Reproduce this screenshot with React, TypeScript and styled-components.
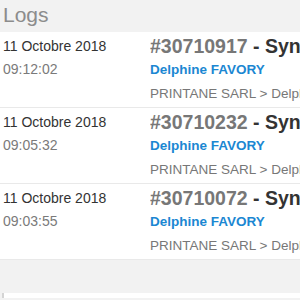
import React from "react";
import styled, { createGlobalStyle } from "styled-components";

const Global = createGlobalStyle`
  html, body { margin: 0; padding: 0; background: #ffffff; }
  body { font-family: "Liberation Sans", Arial, sans-serif; overflow: hidden; }
`;

const Page = styled.div`
  width: 300px;
  height: 300px;
  overflow: hidden;
  background: #f2f2f2;
`;

const Header = styled.div`
  height: 32px;
  background: #f2f2f2;
  padding-left: 3px;
  box-sizing: border-box;
`;

const Title = styled.h1`
  margin: 0;
  font-size: 21px;
  font-weight: 400;
  color: #8c8c8c;
  line-height: 29px;
`;

const List = styled.div`
  background: #ffffff;
`;

const Row = styled.div`
  display: flex;
  height: 76px;
  box-sizing: border-box;
  border-bottom: 1px solid #e9e9e9;
  white-space: nowrap;
  overflow: hidden;
`;

const When = styled.div`
  width: 150px;
  flex: none;
  padding: 4px 0 0 3px;
  box-sizing: border-box;
`;

const DateText = styled.div`
  font-size: 14px;
  line-height: 20px;
  color: #333333;
  margin-bottom: 3px;
`;

const TimeText = styled.div`
  font-size: 14px;
  line-height: 20px;
  color: #7a7a7a;
`;

const Detail = styled.div`
  flex: 1;
  min-width: 0;
  padding-top: 2px;
  overflow: hidden;
`;

const Subject = styled.div`
  font-size: 19.5px;
  font-weight: 700;
  line-height: 24px;
  color: #333333;
`;

const Ref = styled.span`
  color: #777777;
`;

const Author = styled.div`
  font-size: 13.5px;
  font-weight: 700;
  line-height: 18px;
  color: #1b87d2;
  margin-top: 2.5px;
`;

const Path = styled.div`
  font-size: 13.5px;
  line-height: 18px;
  color: #777777;
  margin-top: 6px;
`;

const Footer = styled.div`
  height: 33px;
  background: #f2f2f2;
`;

const Panel = styled.div`
  margin-left: 2px;
  height: 5px;
  background: #ffffff;
  border-left: 2px solid #d4d4d4;
`;

const logs = [
  { date: "11 Octobre 2018", time: "09:12:02", id: "#30710917" },
  { date: "11 Octobre 2018", time: "09:05:32", id: "#30710232" },
  { date: "11 Octobre 2018", time: "09:03:55", id: "#30710072" },
];

export default function App() {
  return (
    <Page>
      <Global />
      <Header>
        <Title>Logs</Title>
      </Header>
      <List>
        {logs.map((l) => (
          <Row key={l.id}>
            <When>
              <DateText>{l.date}</DateText>
              <TimeText>{l.time}</TimeText>
            </When>
            <Detail>
              <Subject>
                <Ref>{l.id}</Ref> - Synchronisation
              </Subject>
              <Author>Delphine FAVORY</Author>
              <Path>PRINTANE SARL &gt; Delphine FAVORY</Path>
            </Detail>
          </Row>
        ))}
      </List>
      <Footer />
      <Panel />
    </Page>
  );
}
